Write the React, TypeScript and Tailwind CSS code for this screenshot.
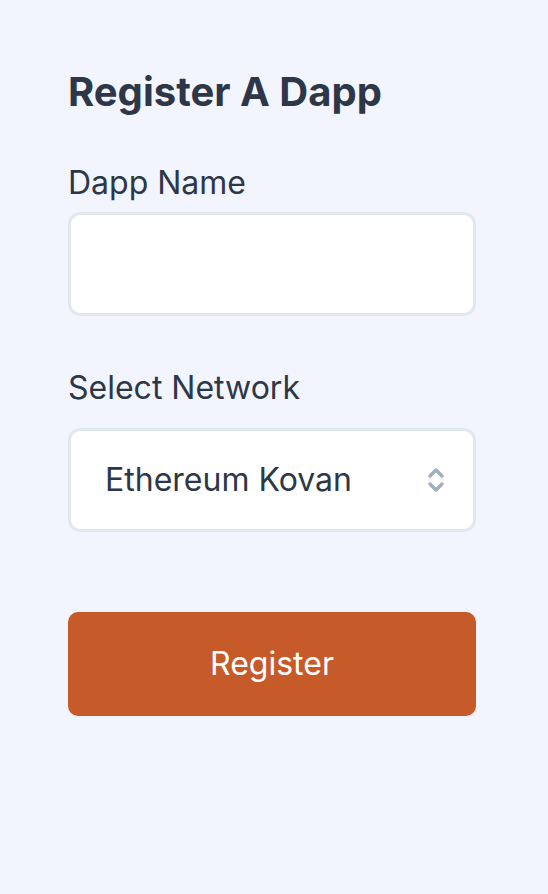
import { useState } from 'react';

export default function App() {
  const [name, setName] = useState('');
  const [network, setNetwork] = useState('kovan');

  return (
    <main className="min-h-screen bg-[#f2f5fe] text-[#2d3748] font-['Inter',sans-serif]">
      <div className="w-[408px] ml-[68px] pt-[68px]">
        <h1 className="text-[40px] font-bold leading-[48px] mb-[47px]">Register A Dapp</h1>

        <label className="block text-[32px] leading-[40px] mb-[9px]">Dapp Name</label>
        <input
          value={name}
          onChange={(e) => setName(e.target.value)}
          className="block w-full h-[104px] bg-white border-[3px] border-[#e2e8f0] rounded-[12px] px-[34px] text-[32px] outline-none"
        />

        <label className="block text-[32px] leading-[40px] mt-[52px] mb-[20px]">Select Network</label>
        <div className="relative">
          <select
            value={network}
            onChange={(e) => setNetwork(e.target.value)}
            className="block w-full h-[104px] appearance-none bg-white border-[3px] border-[#e2e8f0] rounded-[12px] pl-[34px] pr-16 text-[32px] outline-none"
          >
            <option value="kovan">Ethereum Kovan</option>
            <option value="rinkeby">Ethereum Rinkeby</option>
            <option value="ropsten">Ethereum Ropsten</option>
          </select>
          <svg
            className="absolute right-[30px] top-1/2 -translate-y-1/2 w-[20px] h-[28px] text-[#a0aec0] pointer-events-none"
            viewBox="0 0 20 28"
            fill="none"
            stroke="currentColor"
            strokeWidth={3.5}
            strokeLinecap="round"
            strokeLinejoin="round"
          >
            <path d="M4 10l6-6 6 6" />
            <path d="M4 18l6 6 6-6" />
          </svg>
        </div>

        <button className="block w-full h-[104px] mt-[80px] bg-[#c75a29] text-white rounded-[10px] text-[32px]">
          Register
        </button>
      </div>
    </main>
  );
}
